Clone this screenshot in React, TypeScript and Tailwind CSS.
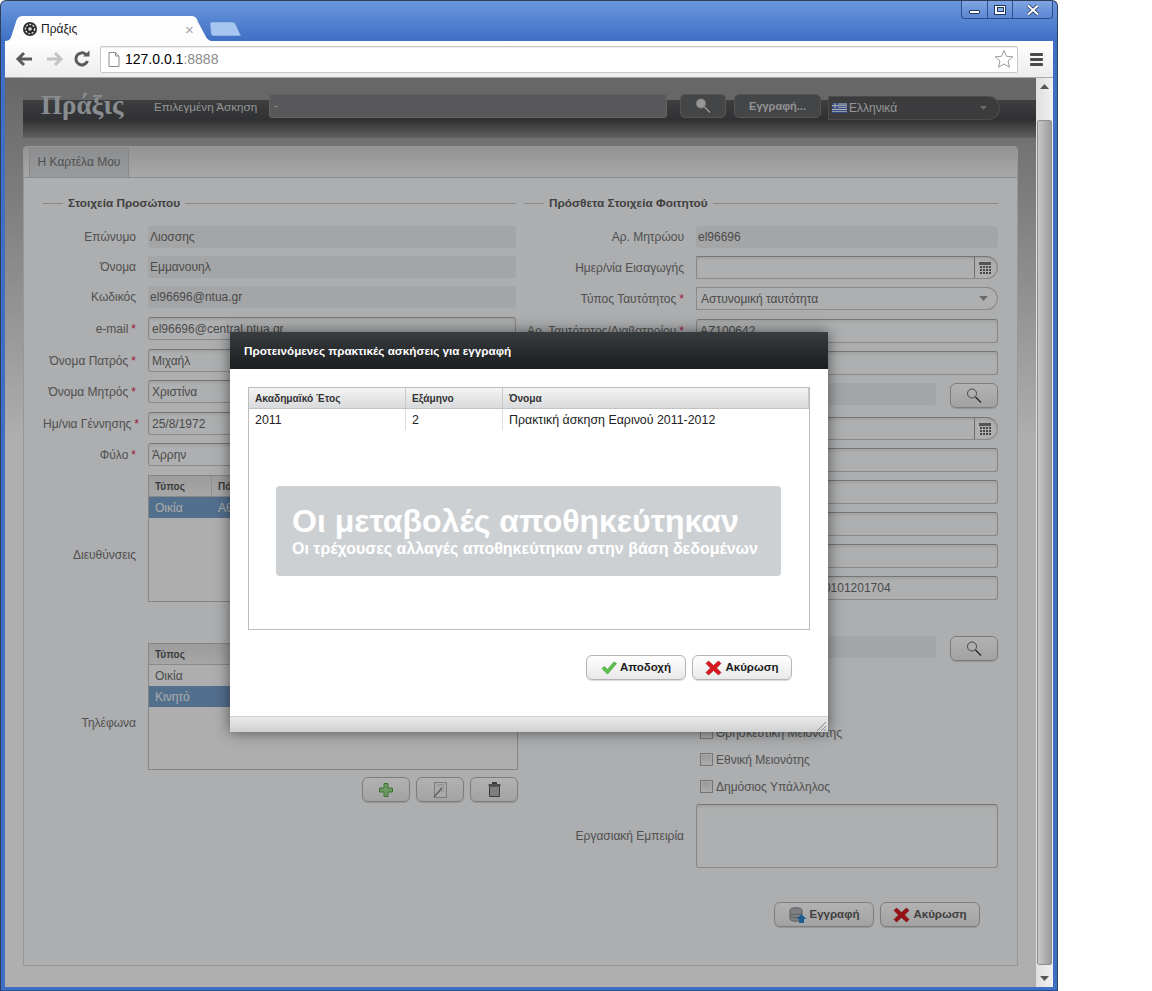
import type { ReactNode } from "react";

const sans = "font-['Liberation_Sans',Arial,sans-serif]";

function WindowControls() {
  return (
    <div className="absolute right-[4px] top-0 flex h-[18px] w-[92px] overflow-hidden rounded-b-[4px] border border-t-0 border-[#2d4f8c] bg-gradient-to-b from-[#7fa5e2] to-[#5b87d2]">
      <div className="flex w-[26px] items-end justify-center border-r border-[#2d4f8c] pb-[4px]">
        <div className="h-[4px] w-[11px] rounded-[1px] border border-[#22375f] bg-white" />
      </div>
      <div className="flex w-[25px] items-center justify-center border-r border-[#2d4f8c]">
        <div className="flex h-[10px] w-[12px] items-center justify-center border border-[#22375f] bg-white">
          <div className="h-[5px] w-[7px] border border-[#22375f] bg-[#8fb1e6]" />
        </div>
      </div>
      <div className="flex flex-1 items-center justify-center">
        <svg width="14" height="12" viewBox="0 0 14 12">
          <path d="M2 1.5 L12 10.5 M12 1.5 L2 10.5" stroke="#22375f" strokeWidth="3.6" />
          <path d="M2 1.5 L12 10.5 M12 1.5 L2 10.5" stroke="#fff" strokeWidth="2" />
        </svg>
      </div>
    </div>
  );
}

function Favicon() {
  return (
    <svg width="16" height="16" viewBox="0 0 16 16">
      <circle cx="8" cy="8" r="7" fill="#2a2a2a" />
      <circle cx="8" cy="8" r="4.6" fill="none" stroke="#ddd" strokeWidth="1.4" strokeDasharray="2 1.4" />
      <circle cx="8" cy="8" r="1.8" fill="#ddd" />
    </svg>
  );
}

function TabStrip() {
  return (
    <div className={`flex h-[40px] items-end ${sans}`}>
      <div className="relative h-[25px] w-[208px]">
        <svg className="absolute inset-0" width="208" height="25" viewBox="0 0 208 25">
          <path
            d="M0 25 C5 25 6 22 7 18 L11 6 C12 2 14 0 18 0 L186 0 C190 0 192 2 193 6 L200 19 C202 23 204 25 208 25 Z"
            fill="#fdfdfd"
          />
        </svg>
        <div className="relative flex h-full items-center pl-[17px] text-[12px] text-[#222]">
          <Favicon />
          <span className="ml-[3px]">Πράξις</span>
          <span className="absolute left-[180px] top-[3px] text-[15px] text-[#a5a5a5]">×</span>
        </div>
      </div>
      <svg className="mb-[5px] -ml-[4px]" width="33" height="14" viewBox="0 0 33 14">
        <path d="M1 2 C1 .5 2 0 3 0 H23 C25 0 26 1 27 3 L32 14 H5 C3 14 2 13 2 11 Z" fill="#a6c5f0" stroke="#5c86cf" strokeWidth=".6" />
      </svg>
    </div>
  );
}

function ChromeBar() {
  return (
    <div className="flex h-[36px] items-center bg-gradient-to-b from-white to-[#ececec] pl-[10px] pr-[10px]">
      <svg width="20" height="16" viewBox="0 0 20 16" className="mr-[9px]">
        <path d="M9 2 L3 8 L9 14 M3.5 8 H17" fill="none" stroke="#5a5a5a" strokeWidth="3" />
      </svg>
      <svg width="20" height="16" viewBox="0 0 20 16" className="mr-[9px]">
        <path d="M11 2 L17 8 L11 14 M16.5 8 H3" fill="none" stroke="#c4c4c4" strokeWidth="3" />
      </svg>
      <svg width="18" height="18" viewBox="0 0 18 18" className="mr-[9px]">
        <path d="M14.5 11 A6 6 0 1 1 13 4.5" fill="none" stroke="#5a5a5a" strokeWidth="3" />
        <path d="M10 6.5 L16.5 6.5 L16.5 0.5 Z" fill="#5a5a5a" />
      </svg>
      <div className={`flex h-[27px] w-[918px] items-center rounded-[2px] border border-[#c8c8c8] bg-white pl-[7px] pr-[3px] shadow-[inset_0_1px_0_#eee] ${sans}`}>
        <svg width="12" height="15" viewBox="0 0 12 15" className="mr-[5px]">
          <path d="M1 .5 H7.5 L11 4 V14.5 H1 Z M7.5 .5 V4 H11" fill="#fff" stroke="#8a8a8a" />
        </svg>
        <span className="text-[14px] text-black">127.0.0.1</span>
        <span className="text-[14px] text-[#8a8a8a]">:8888</span>
        <svg width="20" height="20" viewBox="0 0 20 20" className="ml-auto">
          <path d="M10 1.5 L12.5 7.3 L18.8 7.8 L14 12 L15.5 18.2 L10 15 L4.5 18.2 L6 12 L1.2 7.8 L7.5 7.3 Z" fill="#fff" stroke="#9a9a9a" />
        </svg>
      </div>
      <div className="ml-auto flex w-[13px] flex-col gap-[2px]">
        <div className="h-[3px] rounded-[1px] bg-[#4a4a4a]" />
        <div className="h-[3px] rounded-[1px] bg-[#4a4a4a]" />
        <div className="h-[3px] rounded-[1px] bg-[#4a4a4a]" />
      </div>
    </div>
  );
}

function SearchIcon({ light }: { light?: boolean }) {
  return (
    <svg width="16" height="16" viewBox="0 0 16 16">
      <circle cx="6" cy="5.5" r="4.5" fill={light ? "#d8d8d8" : "#fff"} fillOpacity={light ? 1 : 0.4} stroke={light ? "#bdbdbd" : "#666"} strokeWidth={1} />
      <path d="M9.5 9 L15 14.5" stroke={light ? "#dddddd" : "#333"} strokeWidth={1.2} />
    </svg>
  );
}

function CalendarButton() {
  return (
    <div className="flex w-[23px] flex-col items-center justify-center rounded-r-full border-l border-[#9c9c9c] pr-[2px]">
      <div className="mb-[1px] h-[3px] w-[12px] bg-[#777]" />
      <div className="grid grid-cols-4 gap-[1px]">
        {Array.from({ length: 12 }, (_, i) => (
          <div key={i} className="h-[2px] w-[2px] bg-[#666]" />
        ))}
      </div>
    </div>
  );
}

function Arrow({ color = "#999", w = 9 }: { color?: string; w?: number }) {
  return (
    <svg width={w} height={w * 0.55} viewBox="0 0 9 5">
      <path d="M0 0 H9 L4.5 5 Z" fill={color} />
    </svg>
  );
}

function TextBox({ value, disabled, className = "" }: { value?: string; disabled?: boolean; className?: string }) {
  return (
    <div
      className={`flex items-center rounded-[3px] px-[4px] text-[12px] text-[#6c6c6c] ${
        disabled
          ? "bg-[#ebedef] pl-[2px]"
          : "border border-[#c4c4c4] border-t-[#aaa] bg-[#fafbfc] pl-[3px] shadow-[inset_0_2px_3px_rgba(0,0,0,.08)]"
      } ${className}`}
    >
      {value}
    </div>
  );
}

function DateBox({ value, className = "" }: { value?: string; className?: string }) {
  return (
    <div className={`flex items-stretch rounded-r-full rounded-l-[3px] border border-[#c4c4c4] border-t-[#aaa] bg-[#fafbfc] text-[12px] text-[#6c6c6c] shadow-[inset_0_2px_3px_rgba(0,0,0,.08)] ${className}`}>
      <span className="flex flex-1 items-center pl-[4px]">{value}</span>
      <CalendarButton />
    </div>
  );
}

function Row({ label, req, children, mt, width }: { label?: string; req?: boolean; children: ReactNode; mt: string; width: string }) {
  return (
    <div className={`flex items-center gap-[12px] ${mt}`}>
      <div className={`shrink-0 whitespace-nowrap text-right text-[12px] text-[#747474] ${width}`}>
        {label}
        {req && <span className="ml-[3px] text-[#e02a55]">*</span>}
      </div>
      <div className="min-w-0 flex-1">{children}</div>
    </div>
  );
}

function LeftRow(props: { label?: string; req?: boolean; children: ReactNode; mt: string }) {
  return <Row {...props} width="w-[93px]" />;
}

function RightRow(props: { label?: string; req?: boolean; children: ReactNode; mt: string }) {
  return <Row {...props} width="w-[160px]" />;
}

function Legend({ title, width }: { title: string; width: string }) {
  return (
    <div className={`flex h-[18px] items-center ${width}`}>
      <div className="h-px w-[20px] bg-[#c4c4c4]" />
      <span className="ml-[5px] mr-[5px] whitespace-nowrap text-[11.8px] font-bold leading-[18px] text-[#5c5c5c]">{title}</span>
      <div className="h-px flex-1 bg-[#c4c4c4]" />
    </div>
  );
}

function PlainButton({ children, className = "" }: { children: ReactNode; className?: string }) {
  return (
    <div className={`flex items-center justify-center rounded-[6px] border border-[#b4b4b4] bg-gradient-to-b from-white to-[#e9e9e9] shadow-[0_1px_1px_rgba(0,0,0,.15)] ${className}`}>
      {children}
    </div>
  );
}

function CrossIcon() {
  return (
    <svg width="17" height="16" viewBox="0 0 16 16">
      <path d="M3 1 L8 5.5 L13 1 L15.5 3.5 L11 8 L15.5 12.5 L13 15 L8 10.5 L3 15 L.5 12.5 L5 8 L.5 3.5 Z" fill="#d81920" stroke="#a21218" strokeWidth=".6" />
    </svg>
  );
}

function CheckIcon() {
  return (
    <svg width="16" height="14" viewBox="0 0 16 14">
      <path d="M1 7.5 L3.5 5.5 L6.5 8.5 L13 1 L15.5 2.5 L6.5 13 Z" fill="#5ec34e" stroke="#3f9a35" strokeWidth=".7" />
    </svg>
  );
}

function DbIcon() {
  return (
    <svg width="18" height="16" viewBox="0 0 18 16">
      <path d="M1 3 C1 0 13 0 13 3 V12 C13 15 1 15 1 12 Z" fill="#b6b8bc" stroke="#85888c" />
      <path d="M1 6 C1 8 13 8 13 6 M1 9 C1 11 13 11 13 9" fill="none" stroke="#85888c" />
      <path d="M12.5 7 L17.5 12 H15 V16 H10 V12 H7.5 Z" fill="#2e86d1" />
    </svg>
  );
}

function SmallTable({ cols, rows, selected }: { cols: { name: string; w: string }[]; rows: string[][]; selected: number }) {
  return (
    <div className="h-[127px] border border-[#c0c0c0] bg-[#f9fafb]">
      <div className="flex h-[21px] border-b border-[#c4c4c4] bg-gradient-to-b from-[#e0e0e0] to-[#efefef]">
        {cols.map((c) => (
          <div key={c.name} className={`flex items-center border-r border-[#cdcdcd] pl-[6px] text-[10px] font-bold text-[#555] ${c.w}`}>
            {c.name}
          </div>
        ))}
      </div>
      {rows.map((r, i) => (
        <div key={r[0]} className={`flex h-[21px] ${i === selected ? "bg-[#78a0cc] text-[#f4f4f4]" : "text-[#6c6c6c]"}`}>
          {r.map((v, j) => (
            <div key={j} className={`flex items-center pl-[6px] text-[12px] ${cols[j].w}`}>
              {v}
            </div>
          ))}
        </div>
      ))}
    </div>
  );
}

function TableButtons() {
  return (
    <div className="mt-[7px] flex justify-end gap-[6px]">
      <PlainButton className="h-[25px] w-[48px]">
        <svg width="14" height="14" viewBox="0 0 14 14">
          <path d="M5 .5 H9 V5 H13.5 V9 H9 V13.5 H5 V9 H.5 V5 H5 Z" fill="#9cdc88" stroke="#5fa050" />
        </svg>
      </PlainButton>
      <PlainButton className="h-[25px] w-[48px]">
        <svg width="14" height="16" viewBox="0 0 14 16" className="opacity-70">
          <rect x="1.5" y=".5" width="12" height="15" fill="#f4f4f4" stroke="#999" />
          <path d="M4 3 H11 M7 6 H11 M8 9 H11" stroke="#aaa" />
          <path d="M1 15 L9 6" stroke="#666" strokeWidth="1.6" />
        </svg>
      </PlainButton>
      <PlainButton className="h-[25px] w-[48px]">
        <svg width="13" height="15" viewBox="0 0 13 15">
          <rect x=".5" y="2" width="12" height="2" fill="#777" />
          <rect x="4" y="0" width="5" height="2" fill="#555" />
          <path d="M1.5 4 H11.5 V14.5 H1.5 Z" fill="#b5b5b5" stroke="#555" />
        </svg>
      </PlainButton>
    </div>
  );
}

function LeftColumn() {
  const addressCols = [
    { name: "Τύπος", w: "w-[63px]" },
    { name: "Πόλη", w: "flex-1" },
  ];
  const phoneCols = [{ name: "Τύπος", w: "w-[120px]" }];
  return (
    <div className="w-[475px]">
      <Legend title="Στοιχεία Προσώπου" width="w-[473px]" />
      <LeftRow label="Επώνυμο" mt="mt-[14px]"><TextBox disabled value="Λιοσσης" className="mr-[2px] h-[22px]" /></LeftRow>
      <LeftRow label="Όνομα" mt="mt-[8px]"><TextBox disabled value="Εμμανουηλ" className="mr-[2px] h-[22px]" /></LeftRow>
      <LeftRow label="Κωδικός" mt="mt-[8px]"><TextBox disabled value="el96696@ntua.gr" className="mr-[2px] h-[22px]" /></LeftRow>
      <LeftRow label="e-mail" req mt="mt-[9px]"><TextBox value="el96696@central.ntua.gr" className="mr-[2px] h-[23px]" /></LeftRow>
      <LeftRow label="Όνομα Πατρός" req mt="mt-[9px]"><TextBox value="Μιχαήλ" className="mr-[2px] h-[23px]" /></LeftRow>
      <LeftRow label="Όνομα Μητρός" req mt="mt-[8px]"><TextBox value="Χριστίνα" className="mr-[2px] h-[23px]" /></LeftRow>
      <LeftRow label="Ημ/νια Γέννησης" req mt="mt-[9px]"><TextBox value="25/8/1972" className="mr-[2px] h-[23px]" /></LeftRow>
      <LeftRow label="Φύλο" req mt="mt-[8px]"><TextBox value="Άρρην" className="mr-[2px] h-[23px]" /></LeftRow>
      <LeftRow label="Διευθύνσεις" mt="mt-[9px]">
        <SmallTable cols={addressCols} rows={[["Οικία", "Αθήνα"]]} selected={0} />
        <TableButtons />
      </LeftRow>
      <LeftRow label="Τηλέφωνα" mt="mt-[9px]">
        <SmallTable cols={phoneCols} rows={[["Οικία"], ["Κινητό"]]} selected={1} />
        <TableButtons />
      </LeftRow>
    </div>
  );
}

function Checkbox({ label, mt }: { label: string; mt: string }) {
  return (
    <div className={`ml-[176px] flex h-[13px] items-center gap-[3px] text-[12px] text-[#747474] ${mt}`}>
      <div className="flex h-[13px] w-[13px] shrink-0 items-center justify-center border border-[#a8a8a8] bg-[#f2f2f2]">
        <div className="h-[9px] w-[9px] bg-gradient-to-b from-[#dcdcdc] to-[#f6f6f6]" />
      </div>
      {label}
    </div>
  );
}

function SearchField({ mt, label }: { mt: string; label?: string }) {
  return (
    <RightRow label={label} mt={mt}>
      <div className="flex h-[25px] gap-[14px]">
        <TextBox disabled className="h-[22px] flex-1" />
        <PlainButton className="h-[25px] w-[48px]"><SearchIcon /></PlainButton>
      </div>
    </RightRow>
  );
}

function RightColumn() {
  return (
    <div className="w-[474px]">
      <Legend title="Πρόσθετα Στοιχεία Φοιτητού" width="w-[474px]" />
      <RightRow label="Αρ. Μητρώου" mt="mt-[14px]"><TextBox disabled value="el96696" className="h-[22px]" /></RightRow>
      <RightRow label="Ημερ/νία Εισαγωγής" mt="mt-[8px]"><DateBox className="h-[23px]" /></RightRow>
      <RightRow label="Τύπος Ταυτότητος" req mt="mt-[8px]">
        <div className="flex h-[23px] items-center justify-between rounded-r-full rounded-l-[3px] border border-[#c4c4c4] bg-[#fafbfc] pl-[4px] pr-[9px] text-[12px] text-[#6c6c6c]">
          Αστυνομική ταυτότητα
          <Arrow />
        </div>
      </RightRow>
      <RightRow label="Αρ. Ταυτότητος/Διαβατηρίου" req mt="mt-[9px]"><TextBox value="ΑΖ100642" className="h-[24px]" /></RightRow>
      <RightRow mt="mt-[8px]"><TextBox className="h-[24px]" /></RightRow>
      <SearchField mt="mt-[8px]" />
      <RightRow mt="mt-[9px]"><DateBox className="h-[23px]" /></RightRow>
      <RightRow mt="mt-[8px]"><TextBox className="h-[24px]" /></RightRow>
      <RightRow mt="mt-[8px]"><TextBox className="h-[24px]" /></RightRow>
      <RightRow mt="mt-[8px]"><TextBox className="h-[24px]" /></RightRow>
      <RightRow mt="mt-[8px]"><TextBox className="h-[24px]" /></RightRow>
      <RightRow mt="mt-[8px]"><TextBox value="GR16011012500000000101201704" className="h-[24px]" /></RightRow>
      <SearchField mt="mt-[36px]" />
      <Checkbox label="Άτομο με Αναπηρία" mt="mt-[11px]" />
      <Checkbox label="Κάτοικος Εξωτερικού" mt="mt-[14px]" />
      <Checkbox label="Θρησκευτική Μειονότης" mt="mt-[14px]" />
      <Checkbox label="Εθνική Μειονότης" mt="mt-[14px]" />
      <Checkbox label="Δημόσιος Υπάλληλος" mt="mt-[14px]" />
      <RightRow label="Εργασιακή Εμπειρία" mt="mt-[11px]"><TextBox className="h-[64px]" /></RightRow>
      <div className="mt-[34px] flex justify-end gap-[6px] pr-[18px]">
        <PlainButton className="h-[25px] w-[100px] gap-[3px] text-[11.5px] font-bold text-[#5c5c5c]">
          <DbIcon />
          Εγγραφή
        </PlainButton>
        <PlainButton className="h-[25px] w-[100px] gap-[3px] text-[11.5px] font-bold text-[#5c5c5c]">
          <CrossIcon />
          Ακύρωση
        </PlainButton>
      </div>
    </div>
  );
}

function AppHeader() {
  return (
    <div className="flex h-[60px] items-start bg-[linear-gradient(180deg,#949494_37%,#58595b_37%,#454648_70%,#8c8c8c_100%)] pl-[18px]">
      <span className="mt-[10px] w-[84px] whitespace-nowrap font-['Liberation_Serif',serif] text-[27px] font-bold leading-[34px] text-[#c4cad0]">
        Πράξις
      </span>
      <span className="ml-[29px] mt-[20px] w-[103px] whitespace-nowrap text-[11.7px] text-[#d3d5d6]">Επιλεγμένη Άσκηση</span>
      <div className="ml-[12px] mt-[16px] flex h-[24px] w-[398px] items-center rounded-[3px] border border-[#8f8f8f] bg-[#7e7f81] pl-[4px] text-[12px] text-[#ccc]">
        -
      </div>
      <div className="ml-[13px] mt-[16px] flex h-[24px] w-[46px] items-center justify-center rounded-[5px] border border-[#7a7a7a] bg-[#626366]">
        <SearchIcon light />
      </div>
      <div className="ml-[8px] mt-[16px] flex h-[24px] w-[87px] items-center justify-center rounded-[5px] border border-[#7a7a7a] bg-[#626366] text-[11px] font-bold text-[#d3d5d6]">
        Εγγραφή...
      </div>
      <div className="ml-[7px] mt-[18px] flex h-[24px] w-[172px] items-center rounded-l-[3px] rounded-r-full border border-[#6e6e6e] bg-[#56575a] pl-[3px] pr-[12px] text-[12px] text-[#d3d5d6]">
        <svg width="15" height="10" viewBox="0 0 15 10" className="mr-[2px]">
          <rect width="15" height="10" fill="#fff" />
          <path d="M0 1 H15 M0 3.2 H15 M0 5.4 H15 M0 7.6 H15 M0 9.6 H15" stroke="#4a6fc0" strokeWidth="1.1" />
          <rect width="6" height="5.5" fill="#4a6fc0" />
          <path d="M3 0 V5.5 M0 2.7 H6" stroke="#fff" />
        </svg>
        Ελληνικά
        <span className="ml-auto"><Arrow color="#9a9a9a" w={7} /></span>
      </div>
    </div>
  );
}

function Modal() {
  const cols = [
    { name: "Ακαδημαϊκό Έτος", w: "w-[157px]" },
    { name: "Εξάμηνο", w: "w-[97px]" },
    { name: "Όνομα", w: "flex-1" },
  ];
  return (
    <div className="absolute left-[225px] top-[254px] flex h-[400px] w-[598px] flex-col bg-white shadow-[0_0_14px_rgba(0,0,0,.55)]">
      <div className="flex h-[37px] items-center bg-gradient-to-b from-[#3a3d40] to-[#1b1e20] pl-[14px] text-[11.7px] font-bold text-white">
        Προτεινόμενες πρακτικές ασκήσεις για εγγραφή
      </div>
      <div className="relative flex-1">
        <div className="mx-[18px] mt-[18px] h-[243px] border border-[#bcbcbc]">
          <div className="flex h-[21px] border-b border-[#c4c4c4] bg-gradient-to-b from-[#f4f4f4] to-[#d9dadb]">
            {cols.map((c) => (
              <div key={c.name} className={`flex items-center border-r border-[#c9c9c9] pl-[6px] pt-[1px] text-[10.2px] font-bold text-[#333] ${c.w}`}>
                {c.name}
              </div>
            ))}
          </div>
          <div className="flex h-[21px] text-[12.4px] text-[#222]">
            <div className="flex w-[157px] items-center border-r border-[#ddd] pl-[6px] pt-[2px]">2011</div>
            <div className="flex w-[97px] items-center border-r border-[#ddd] pl-[6px] pt-[2px]">2</div>
            <div className="flex flex-1 items-center pl-[6px] pt-[2px]">Πρακτική άσκηση Εαρινού 2011-2012</div>
          </div>
        </div>
        <div className="mt-[25px] flex justify-end gap-[6px] pr-[36px]">
          <PlainButton className="h-[25px] w-[100px] gap-[3px] text-[11.5px] font-bold text-[#1c1c1c]">
            <CheckIcon />
            Αποδοχή
          </PlainButton>
          <PlainButton className="h-[25px] w-[100px] gap-[3px] text-[11.5px] font-bold text-[#1c1c1c]">
            <CrossIcon />
            Ακύρωση
          </PlainButton>
        </div>
        <div className="absolute left-[46px] top-[117px] h-[90px] w-[505px] rounded-[4px] bg-[#cdd0d3] pl-[16px] pt-[17px] font-bold text-white">
          <div className="whitespace-nowrap text-[32px] leading-[36px]">Οι μεταβολές αποθηκεύτηκαν</div>
          <div className="mt-[1px] whitespace-nowrap text-[16px] leading-[18px]">Οι τρέχουσες αλλαγές αποθηκεύτηκαν στην βάση δεδομένων</div>
        </div>
      </div>
      <div className="relative h-[16px] border-t border-[#cfcfcf] bg-gradient-to-b from-[#eaeaea] to-[#cfd0d1]">
        <svg className="absolute bottom-0 right-[1px]" width="12" height="12" viewBox="0 0 12 12">
          <path d="M11 2 L2 11 M11 6 L6 11 M11 9 L9 11" stroke="#8a8a8a" />
        </svg>
      </div>
    </div>
  );
}

function PageContent() {
  return (
    <div className={`relative h-[909px] flex-1 overflow-hidden bg-gradient-to-b from-[#939393] to-[#fbfbfb] to-[40%] pl-[18px] ${sans}`}>
      <AppHeader />
      <div className="mt-[8px] h-[820px] w-[995px] rounded-t-[4px] border border-[#d8d8d8] bg-[#f7f9fb]">
        <div className="flex h-[30px] bg-gradient-to-b from-[#d2d3d5] to-[#f0f1f2] pl-[5px]">
          <div className="flex w-[100px] items-center justify-center border-x border-[#c0c2c4] bg-gradient-to-b from-[#c8cbce] to-[#dcdee0] text-[12px] text-[#747474]">
            Η Καρτέλα Μου
          </div>
        </div>
        <div className="flex gap-[6px] border-t border-[#c8cacc] pl-[19px] pt-[16px]">
          <LeftColumn />
          <RightColumn />
        </div>
      </div>
      <div className="absolute inset-0 bg-black/30" />
      <Modal />
    </div>
  );
}

function Scrollbar() {
  return (
    <div className="flex w-[17px] flex-col bg-gradient-to-r from-[#e0e0e0] to-[#f0f0f0]">
      <div className="flex h-[17px] items-center justify-center">
        <svg width="9" height="5" viewBox="0 0 9 5"><path d="M0 5 H9 L4.5 0 Z" fill="#555" /></svg>
      </div>
      <div className="mx-[1px] mt-[25px] flex-1 rounded-[2px] border border-[#8e8e8e] bg-gradient-to-r from-[#c8c8c8] to-[#9c9c9c]" />
      <div className="mt-[5px] flex h-[17px] items-center justify-center"><Arrow color="#555" /></div>
    </div>
  );
}

export default function App() {
  return (
    <div className="h-[991px] w-[1152px] overflow-hidden bg-white">
      <div className="relative flex h-[991px] w-[1058px] flex-col rounded-t-[6px] border border-[#2f3f5a] border-b-[#2a4f95] bg-gradient-to-b from-[#6a97dc] from-0% to-[#3f6fc4] to-[4%] px-[4px] pb-[3px]">
        <WindowControls />
        <TabStrip />
        <ChromeBar />
        <div className="flex flex-1 border-t border-[#a9a9a9]">
          <PageContent />
          <Scrollbar />
        </div>
      </div>
    </div>
  );
}
